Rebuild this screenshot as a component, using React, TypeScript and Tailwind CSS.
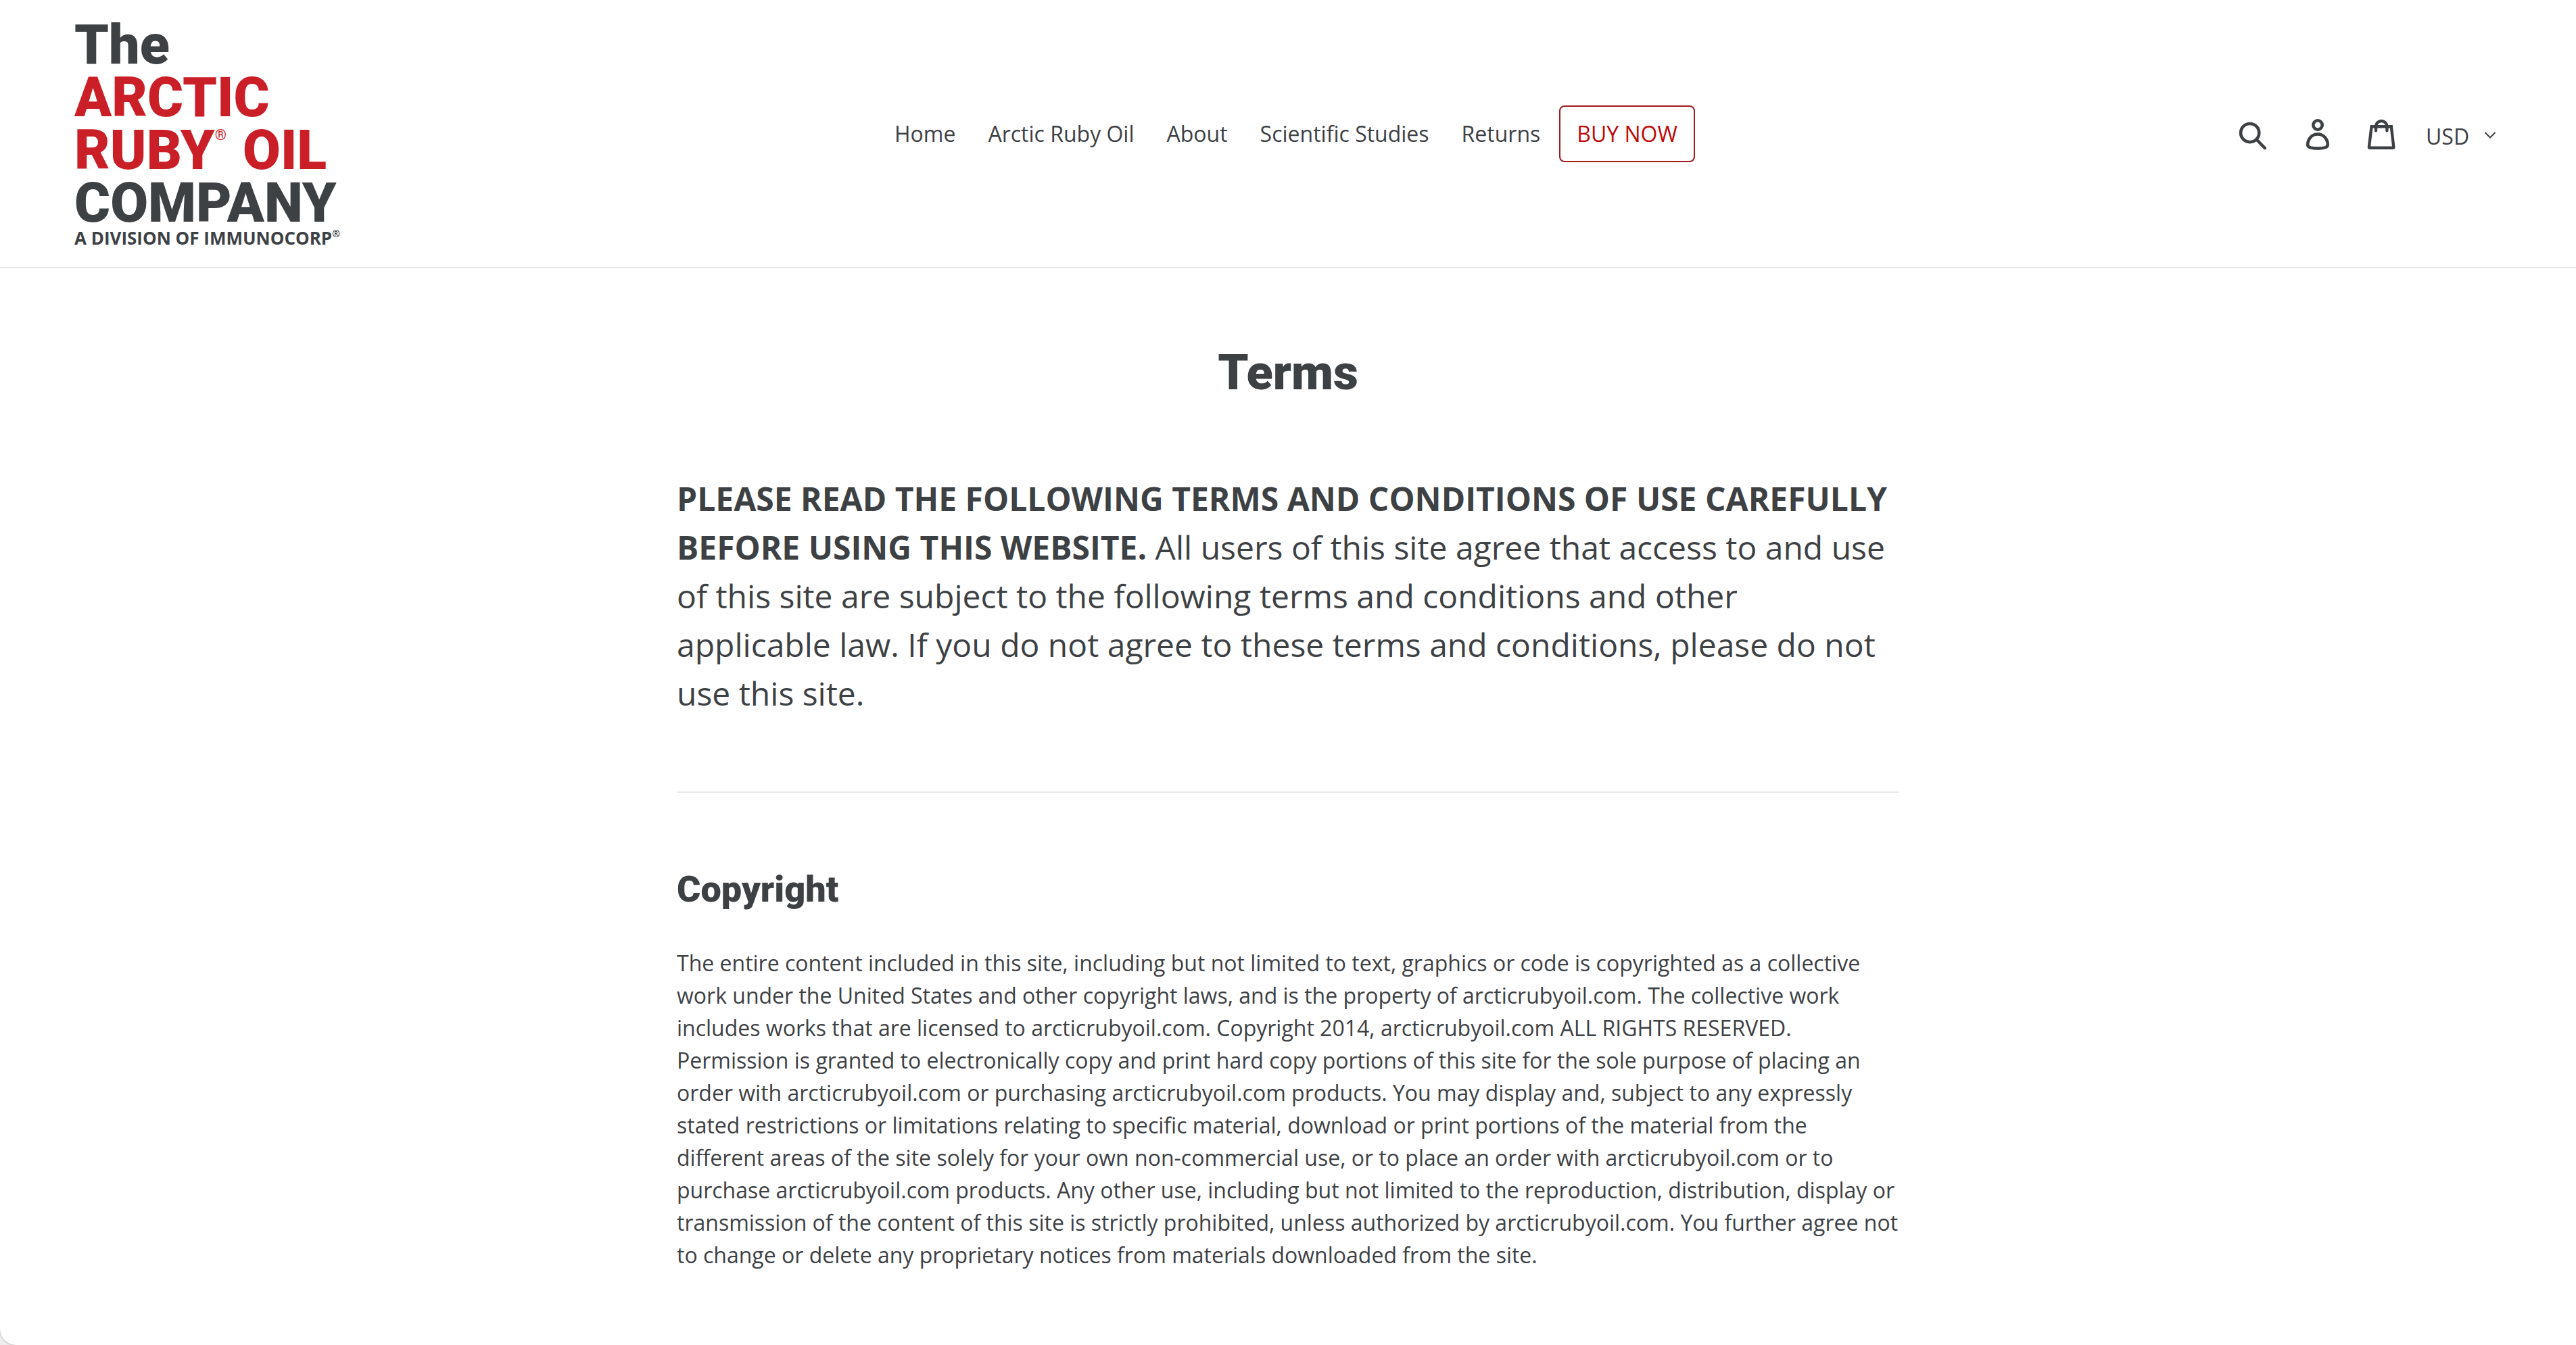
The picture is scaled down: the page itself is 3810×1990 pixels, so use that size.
const NAV_LINKS = ["Home", "Arctic Ruby Oil", "About", "Scientific Studies", "Returns"];

const ICON_CLASS = "block size-12 fill-none stroke-[#3d4144]";

function SearchIcon() {
  return (
    <svg viewBox="0 0 48 48" className={ICON_CLASS} strokeWidth="4.6" strokeLinecap="round" aria-hidden="true">
      <circle cx="19.7" cy="20.6" r="13.6" />
      <path d="M30 31 41.8 43" />
    </svg>
  );
}

function AccountIcon() {
  return (
    <svg viewBox="0 0 48 48" className={ICON_CLASS} strokeWidth="4.6" aria-hidden="true">
      <circle cx="24" cy="9" r="6.7" />
      <path d="M24 22.5C14.6 22.5 9.2 30.6 9.2 38.2c0 3.8 6.3 5.3 14.8 5.3s14.8-1.5 14.8-5.3c0-7.6-5.4-15.7-14.8-15.7Z" />
    </svg>
  );
}

function CartIcon() {
  return (
    <svg viewBox="0 0 48 48" className={ICON_CLASS} strokeWidth="4.4" aria-hidden="true">
      <path d="M7.6 11.3h29.2l3.5 30.2q.1 1.2-1.1 1.2H5q-1.2 0-1.1-1.2Z" />
      <path d="M14 17.2v-6a8.2 8.2 0 0 1 16.4 0v6" strokeLinecap="round" />
    </svg>
  );
}

function Logo() {
  return (
    <a href="#home" className="block w-max pt-7 pb-[31px]">
      <span className="block font-['Roboto',sans-serif] text-[81px] leading-[78px] font-black">
        <span className="block">The</span>
        <span className="block text-[#cb1f27]">ARCTIC</span>
        <span className="flex text-[#cb1f27]">
          RUBY
          <span className="mr-6 pt-1 text-[22px] leading-6 font-normal">®</span>
          OIL
        </span>
        <span className="block">COMPANY</span>
      </span>
      <span className="flex text-[26px] leading-6 font-bold">
        A DIVISION OF IMMUNOCORP
        <span className="text-[14px] leading-3">®</span>
      </span>
    </a>
  );
}

function Header() {
  return (
    <header className="grid grid-cols-[1fr_auto_1fr] items-center border-b-2 border-[#e8e9eb] px-[110px]">
      <Logo />
      <nav aria-label="Main" className="flex items-center">
        {NAV_LINKS.map((label) => (
          <a key={label} href="#page" className="px-6 whitespace-nowrap">
            {label}
          </a>
        ))}
        <a
          href="#buy"
          className="mx-1 rounded-lg border-2 border-[#a01c20] px-6 py-4 whitespace-nowrap text-[#c00a0a]"
        >
          BUY NOW
        </a>
      </nav>
      <div className="flex items-center justify-end gap-12 pt-1">
        <button type="button" aria-label="Search">
          <SearchIcon />
        </button>
        <button type="button" aria-label="Log in">
          <AccountIcon />
        </button>
        <button type="button" aria-label="Cart">
          <CartIcon />
        </button>
        <div className="-ml-2 grid items-center pt-1">
          <select
            aria-label="Currency"
            defaultValue="USD"
            className="col-start-1 row-start-1 w-28 appearance-none bg-transparent leading-12"
          >
            <option>USD</option>
            <option>CAD</option>
            <option>EUR</option>
          </select>
          <svg
            viewBox="0 0 18 10"
            className="pointer-events-none col-start-1 row-start-1 mr-2 mb-1 h-[10px] w-[18px] justify-self-end fill-none stroke-[#3d4144]"
            strokeWidth="2"
            strokeLinecap="round"
            aria-hidden="true"
          >
            <path d="m2 1.5 7 7 7-7" />
          </svg>
        </div>
      </div>
    </header>
  );
}

export default function App() {
  return (
    <div className="min-h-screen bg-[#ededed] font-['Open_Sans',sans-serif] text-[32px] leading-12 text-[#3d4144]">
      <div className="min-h-screen rounded-bl-3xl bg-white shadow-[0_0_3px_#999999]">
        <Header />
        <main className="mx-auto max-w-[1808px] pt-[119px] pb-[109px]">
          <h1 className="text-center font-['Roboto',sans-serif] text-[72px] leading-[72px] font-black">Terms</h1>
          <p className="mt-[114px] text-[48px] leading-[72px]">
            <strong className="font-bold">
              PLEASE READ THE FOLLOWING TERMS AND CONDITIONS OF USE CAREFULLY BEFORE USING THIS WEBSITE.
            </strong>{" "}
            All users of this site agree that access to and use of this site are subject to the following terms and
            conditions and other applicable law. If you do not agree to these terms and conditions, please do not use
            this site.
          </p>
          <hr className="mt-[109px] border-t-2 border-[#e8e9eb]" />
          <h2 className="mt-[111px] font-['Roboto',sans-serif] text-[54px] leading-[64px] font-black">Copyright</h2>
          <p className="mt-[53px]">
            The entire content included in this site, including but not limited to text, graphics or code is
            copyrighted as a collective work under the United States and other copyright laws, and is the property of
            arcticrubyoil.com. The collective work includes works that are licensed to arcticrubyoil.com. Copyright
            2014, arcticrubyoil.com ALL RIGHTS RESERVED. Permission is granted to electronically copy and print hard
            copy portions of this site for the sole purpose of placing an order with arcticrubyoil.com or purchasing
            arcticrubyoil.com products. You may display and, subject to any expressly stated restrictions or
            limitations relating to specific material, download or print portions of the material from the different
            areas of the site solely for your own non-commercial use, or to place an order with arcticrubyoil.com or to
            purchase arcticrubyoil.com products. Any other use, including but not limited to the reproduction,
            distribution, display or transmission of the content of this site is strictly prohibited, unless authorized
            by arcticrubyoil.com. You further agree not to change or delete any proprietary notices from materials
            downloaded from the site.
          </p>
        </main>
      </div>
    </div>
  );
}
